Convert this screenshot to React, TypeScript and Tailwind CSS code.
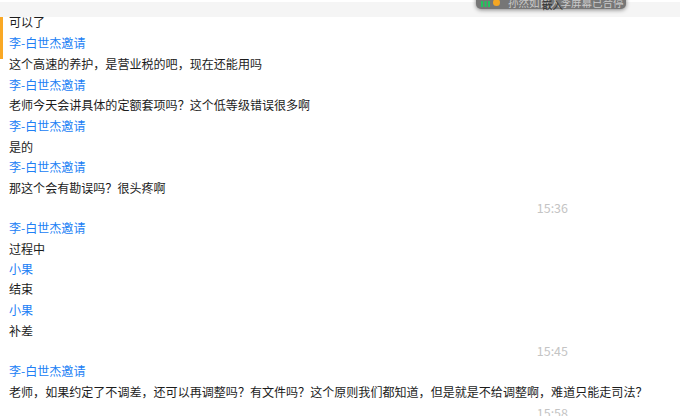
const font = "[font-family:'Noto_Sans_CJK_SC','Liberation_Sans',sans-serif]";

type Row = { kind: "name" | "msg" | "time"; text: string; h: string };

const rows: Row[] = [
  { kind: "msg", text: "可以了", h: "h-[21px]" },
  { kind: "name", text: "李-白世杰邀请", h: "h-[21px]" },
  { kind: "msg", text: "这个高速的养护，是营业税的吧，现在还能用吗", h: "h-[21px]" },
  { kind: "name", text: "李-白世杰邀请", h: "h-[20px]" },
  { kind: "msg", text: "老师今天会讲具体的定额套项吗？这个低等级错误很多啊", h: "h-[21px]" },
  { kind: "name", text: "李-白世杰邀请", h: "h-[21px]" },
  { kind: "msg", text: "是的", h: "h-[20px]" },
  { kind: "name", text: "李-白世杰邀请", h: "h-[21px]" },
  { kind: "msg", text: "那这个会有勘误吗？很头疼啊", h: "h-[21px]" },
  { kind: "time", text: "15:36", h: "h-[19px]" },
  { kind: "name", text: "李-白世杰邀请", h: "h-[21px]" },
  { kind: "msg", text: "过程中", h: "h-[21px]" },
  { kind: "name", text: "小果", h: "h-[18px]" },
  { kind: "msg", text: "结束", h: "h-[22px]" },
  { kind: "name", text: "小果", h: "h-[21px]" },
  { kind: "msg", text: "补差", h: "h-[21px]" },
  { kind: "time", text: "15:45", h: "h-[19px]" },
  { kind: "name", text: "李-白世杰邀请", h: "h-[21px]" },
  { kind: "msg", text: "老师，如果约定了不调差，还可以再调整吗？有文件吗？这个原则我们都知道，但是就是不给调整啊，难道只能走司法？", h: "h-[21px]" },
  { kind: "time", text: "15:58", h: "h-[20px]" },
];

function ChatRow({ row }: { row: Row }) {
  if (row.kind === "time") {
    return (
      <div className={`${row.h} flex items-center justify-end pr-[112px] text-[12.5px] text-[#c4c4c4]`}>
        {row.text}
      </div>
    );
  }
  return (
    <div
      className={`${row.h} flex items-center pl-[9px] text-[12.06px] whitespace-nowrap ${
        row.kind === "name" ? "text-[#2080f5]" : "text-[#1c1c1c]"
      }`}
    >
      {row.text}
    </div>
  );
}

export default function App() {
  return (
    <div className={`relative h-[416px] w-[680px] overflow-hidden bg-white ${font}`}>
      <div className="mt-[2px] h-[15px] bg-[#f5f5f5]" />

      {/* left accent */}
      <div className="absolute left-0 top-[17px] h-[42px] w-[3px] bg-[#f9a825]" />

      <div className="relative -mt-[5px]">
        {rows.map((row, i) => (
          <ChatRow key={i} row={row} />
        ))}
      </div>

      {/* floating share bar */}
      <div className="absolute left-[476px] top-[-10px] flex h-[19px] w-[150px] items-center gap-[3px] rounded-b-[5px] bg-[#767676] pl-[5px] shadow-[0_1px_4px_rgba(0,0,0,0.45)]">
        <svg width="9" height="6" viewBox="0 0 9 6" className="mt-[8px] shrink-0">
          <rect x="0" y="0" width="2" height="6" fill="#22c55e" />
          <rect x="3.5" y="0" width="2" height="6" fill="#22c55e" />
          <rect x="7" y="0" width="2" height="6" fill="#22c55e" />
        </svg>
        <span className="mt-[6px] h-[7px] w-[7px] shrink-0 rounded-full bg-[#f5a623]" />
        <span className="mt-[7px] pl-[5px] text-[10.5px] whitespace-nowrap text-[#c9c9c9]">孙然如白入李屏幕已合停</span>
      </div>
      <span className="absolute left-[542px] top-[-3px] text-[10.5px] text-[#333333]">嵌入</span>
    </div>
  );
}
